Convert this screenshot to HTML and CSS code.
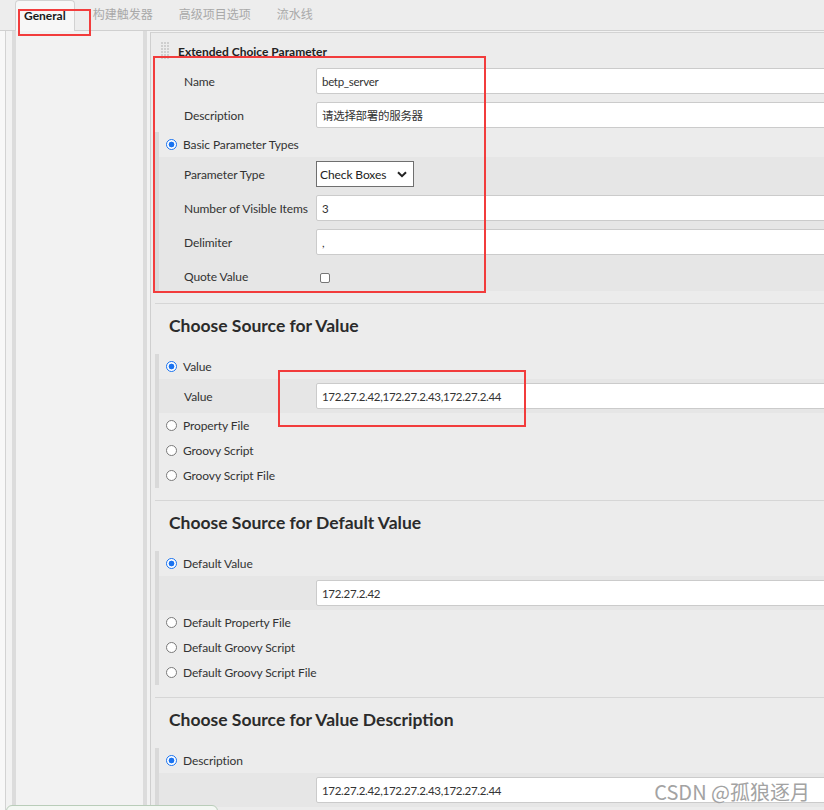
FILE: index.html
```html
<!DOCTYPE html>
<html lang="zh-CN">
<head>
<meta charset="utf-8">
<title>Extended Choice Parameter</title>
<link rel="stylesheet" href="styles.css">
</head>
<body>
<div class="page">
  <div class="tabbar">
    <div class="tab active">General</div>
    <div class="tab first">构建触发器</div>
    <div class="tab">高级项目选项</div>
    <div class="tab">流水线</div>
  </div>
  <div class="main">
    <div class="gutter"></div>
    <div class="sidebar"></div>
    <div class="panel">
      <div class="param-head">
        <svg class="grip" width="10" height="20" viewBox="0 0 10 20">
          <g fill="#cfcfcf">
            <rect x="0" y="0" width="2" height="2"/><rect x="3" y="0" width="2" height="2"/><rect x="6" y="0" width="2" height="2"/>
            <rect x="0" y="3" width="2" height="2"/><rect x="3" y="3" width="2" height="2"/><rect x="6" y="3" width="2" height="2"/>
            <rect x="0" y="6" width="2" height="2"/><rect x="3" y="6" width="2" height="2"/><rect x="6" y="6" width="2" height="2"/>
            <rect x="0" y="9" width="2" height="2"/><rect x="3" y="9" width="2" height="2"/><rect x="6" y="9" width="2" height="2"/>
            <rect x="0" y="12" width="2" height="2"/><rect x="3" y="12" width="2" height="2"/><rect x="6" y="12" width="2" height="2"/>
            <rect x="0" y="15" width="2" height="2"/><rect x="3" y="15" width="2" height="2"/><rect x="6" y="15" width="2" height="2"/>
          </g>
        </svg>
        <span class="param-title">Extended Choice Parameter</span>
      </div>

      <div class="row top"><span class="label">Name</span><input class="field" type="text" value="betp_server"></div>
      <div class="row top"><span class="label">Description</span><input class="field" type="text" value="请选择部署的服务器"></div>

      <div class="group first-group">
        <label class="radio-row"><input class="radio" type="radio" name="ptype" checked><span>Basic Parameter Types</span></label>
        <div class="row sub"><span class="label">Parameter Type</span>
          <div class="select"><span>Check Boxes</span>
            <svg width="10" height="7" viewBox="0 0 10 7"><path d="M1 1.2 L5 5.2 L9 1.2" fill="none" stroke="#222" stroke-width="2"/></svg>
          </div>
        </div>
        <div class="row sub"><span class="label">Number of Visible Items</span><input class="field" type="text" value="3"></div>
        <div class="row sub"><span class="label">Delimiter</span><input class="field" type="text" value=","></div>
        <div class="row sub short"><span class="label">Quote Value</span><span class="checkbox"></span></div>
      </div>

      <div class="section">
        <h3 class="heading">Choose Source for Value</h3>
        <div class="group">
          <label class="radio-row"><input class="radio" type="radio" name="src" checked><span>Value</span></label>
          <div class="row sub"><span class="label">Value</span><input class="field" type="text" value="172.27.2.42,172.27.2.43,172.27.2.44"></div>
          <label class="radio-row"><input class="radio" type="radio" name="src"><span>Property File</span></label>
          <label class="radio-row"><input class="radio" type="radio" name="src"><span>Groovy Script</span></label>
          <label class="radio-row"><input class="radio" type="radio" name="src"><span>Groovy Script File</span></label>
        </div>
      </div>

      <div class="section">
        <h3 class="heading">Choose Source for Default Value</h3>
        <div class="group">
          <label class="radio-row"><input class="radio" type="radio" name="dsrc" checked><span>Default Value</span></label>
          <div class="row sub"><span class="label"></span><input class="field" type="text" value="172.27.2.42"></div>
          <label class="radio-row"><input class="radio" type="radio" name="dsrc"><span>Default Property File</span></label>
          <label class="radio-row"><input class="radio" type="radio" name="dsrc"><span>Default Groovy Script</span></label>
          <label class="radio-row"><input class="radio" type="radio" name="dsrc"><span>Default Groovy Script File</span></label>
        </div>
      </div>

      <div class="section">
        <h3 class="heading">Choose Source for Value Description</h3>
        <div class="group">
          <label class="radio-row"><input class="radio" type="radio" name="vsrc" checked><span>Description</span></label>
          <div class="row sub"><span class="label"></span><input class="field" type="text" value="172.27.2.42,172.27.2.43,172.27.2.44"></div>
        </div>
      </div>
    </div>
  </div>

  <div class="mark mark-tab"></div>
  <div class="mark mark-basic"></div>
  <div class="mark mark-value"></div>
  <div class="toast"></div>
  <div class="watermark">CSDN @孤狼逐月</div>
</div>
</body>
</html>
```

FILE: styles.css
```css
* { box-sizing: border-box; }

html, body {
  margin: 0;
  padding: 0;
}

body {
  width: 824px;
  height: 810px;
  overflow: hidden;
  font-family: "Lato", "Noto Sans CJK SC", sans-serif;
  font-size: 12px;
  letter-spacing: -0.1px;
  color: #333;
  background: #f2f2f2;
}

.page {
  position: relative;
  width: 824px;
  height: 810px;
  overflow: hidden;
}

/* tabs */
.tabbar {
  display: flex;
  align-items: flex-end;
  height: 31px;
  padding-left: 15px;
  background: #ededed;
  border-bottom: 1px solid #d0d0d0;
}

.tab {
  height: 30px;
  line-height: 30px;
  padding: 0 13px;
  color: #a9a9a9;
  letter-spacing: 0;
}

.tab.first { margin-left: 5px; }

.tab.active {
  height: 31px;
  margin-bottom: -1px;
  padding: 0 8px;
  line-height: 30px;
  background: #f7f7f7;
  border: 1px solid #d2d2d2;
  border-bottom: none;
  border-radius: 4px 4px 0 0;
  color: #1a1a1a;
  font-weight: bold;
}

/* layout */
.main {
  display: flex;
  height: 779px;
}

.gutter {
  flex: 0 0 6px;
  background: #f8f8f8;
  border-right: 1px solid #d3d3d3;
}

.sidebar {
  flex: 0 0 135px;
  margin-left: 6px;
  margin-right: 3px;
  background: #f2f2f2;
  border-left: 4px solid #dcdcdc;
  border-right: 4px solid #dcdcdc;
}

.panel {
  flex: 1;
  margin-top: 1px;
  background: #ececec;
  border-left: 1px solid #cfcfcf;
  border-top: 1px solid #d3d3d3;
  overflow: hidden;
}

.param-head {
  display: flex;
  align-items: center;
  gap: 7px;
  height: 31px;
  padding: 6px 0 0 10px;
}

.param-title {
  font-weight: bold;
  color: #222;
  letter-spacing: 0;
}

/* rows */
.row {
  display: flex;
  align-items: center;
  height: 34px;
}

.row.top { padding-left: 33px; }

.row.sub {
  padding-left: 25px;
  background: #e6e6e6;
}

.row.short {
  height: 32px;
  align-items: flex-start;
  padding-top: 10px;
}

.label {
  flex: 0 0 132px;
  color: #333;
  white-space: nowrap;
}

.field {
  flex: 0 0 560px;
  width: 560px;
  height: 26px;
  margin: 0;
  padding: 0 5px;
  border: 1px solid #cbcbcb;
  border-radius: 2px;
  background: #fff;
  font-family: "Lato", "Noto Sans CJK SC", sans-serif;
  font-size: 11.5px;
  letter-spacing: -0.3px;
  color: #333;
  outline: none;
}

.select {
  display: flex;
  align-items: center;
  justify-content: space-between;
  width: 98px;
  height: 26px;
  padding: 0 6px 0 3px;
  border: 1px solid #6f6f6f;
  background: #fff;
  color: #222;
}

.checkbox {
  width: 10px;
  height: 10px;
  margin: 4px 0 0 4px;
  border: 1px solid #767676;
  border-radius: 2px;
  background: #fff;
}

/* groups */
.group {
  border-left: 4px solid #d9d9d9;
}

.first-group { margin-left: 4px; }

.radio-row {
  display: flex;
  align-items: center;
  gap: 6px;
  height: 25px;
  padding-left: 7px;
  color: #333;
}

.radio {
  appearance: none;
  -webkit-appearance: none;
  width: 11px;
  height: 11px;
  margin: 0;
  border: 1px solid #7a7a7a;
  border-radius: 50%;
  background: #fff;
}

.radio:checked {
  border: 1.5px solid #1a73f0;
  background: radial-gradient(circle, #1a73f0 0 2.6px, #fff 3.2px);
}

/* sections */
.section {
  margin: 12px 0 0 4px;
  border-top: 1px solid #d6d6d6;
}

.heading {
  margin: 12px 0 18px 0;
  padding-left: 14px;
  font-size: 17.5px;
  line-height: 20px;
  font-weight: bold;
  letter-spacing: 0;
  color: #2b2b2b;
}

/* annotation overlays */
.mark {
  position: absolute;
  border: 2px solid #f23c3c;
}

.mark-tab { left: 18px; top: 9px; width: 73px; height: 27px; }
.mark-basic { left: 153px; top: 56px; width: 333px; height: 237px; }
.mark-value { left: 278px; top: 370px; width: 248px; height: 57px; }

.toast {
  position: absolute;
  left: 6px;
  top: 805px;
  width: 212px;
  height: 14px;
  border: 1px solid #b9cdb9;
  border-radius: 6px;
  background: #f4f8f4;
}

.watermark {
  position: absolute;
  right: 14px;
  top: 779px;
  font-family: "Noto Sans CJK SC", sans-serif;
  font-size: 20px;
  line-height: 26px;
  letter-spacing: 0;
  color: #a3a3a3;
  text-shadow: 0 0 1px #fff;
}
```
